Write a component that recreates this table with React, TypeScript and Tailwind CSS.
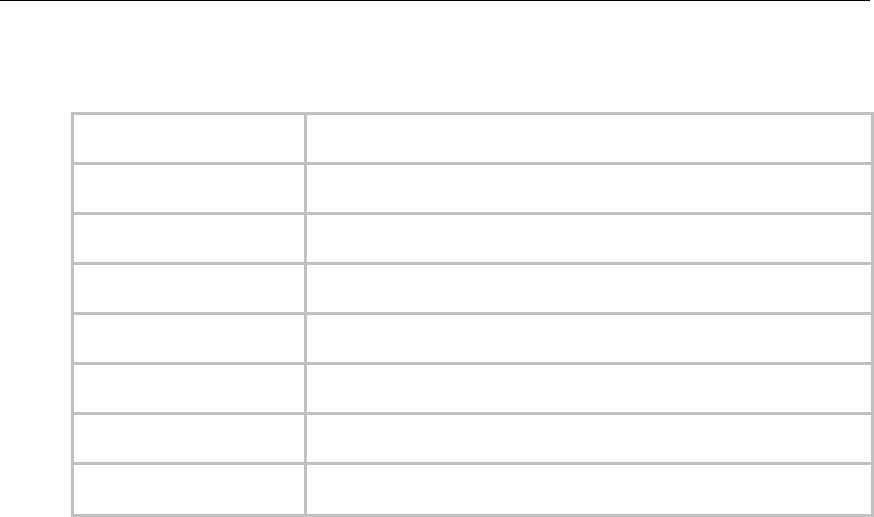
import React from "react";

export default function App() {
  const rows = [0, 1, 2, 3, 4, 5, 6, 7];
  return (
    <div className="w-[874px] h-[517px] bg-white overflow-hidden relative" style={{ fontFamily: '"Liberation Sans", Arial, sans-serif' }}>
      <div className="h-px w-[870px] bg-black" />
      <div className="ml-[71px] mt-[111px] w-[803px] border-[3px] border-[#c0c0c0]">
        {rows.map((r, i) => (
          <div
            key={r}
            className={`flex ${i === 0 ? "h-[47px]" : "border-t-[3px] border-[#c0c0c0]"} ${i === rows.length - 1 ? "h-[52px]" : i === 0 ? "" : "h-[50px]"}`}
          >
            <div className="w-[230px] shrink-0" />
            <div className="flex-1 border-l-[3px] border-[#c0c0c0]" />
          </div>
        ))}
      </div>
    </div>
  );
}
